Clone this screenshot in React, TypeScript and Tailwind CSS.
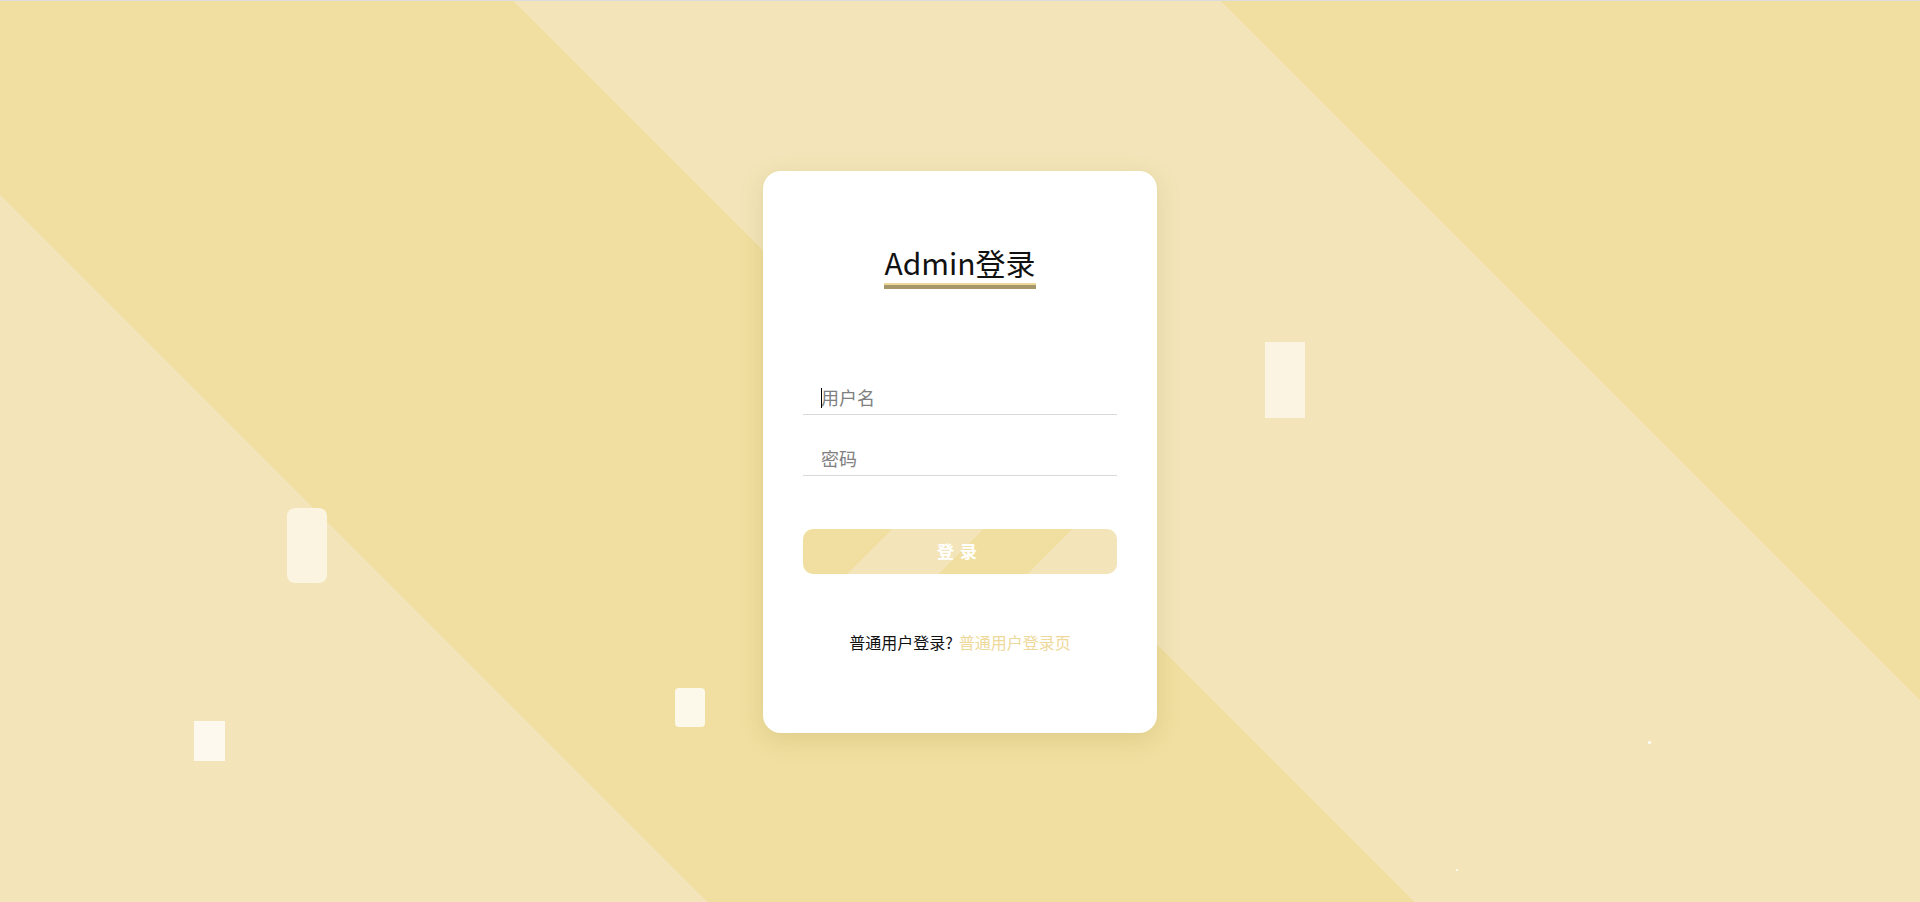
import { useState } from "react";

const font = { fontFamily: '"Noto Sans CJK SC", "Noto Sans", sans-serif' };

function Field({ placeholder, type = "text", caret = false }: { placeholder: string; type?: string; caret?: boolean }) {
  const [value, setValue] = useState("");
  return (
    <div className="relative w-full">
      <input
        type={type}
        value={value}
        onChange={(e) => setValue(e.target.value)}
        placeholder={placeholder}
        className="block h-[40px] w-full border-b border-[#d9d9d9] bg-transparent pt-[6px] pl-[18px] text-[18px] text-[#333] outline-none placeholder:text-[#808080]"
        style={font}
      />
      {caret && !value && <span className="absolute left-[18px] top-[13px] h-[20px] w-px bg-black" />}
    </div>
  );
}

export default function App() {
  return (
    <div className="flex h-screen w-full flex-col overflow-hidden" style={font}>
      <div className="h-px w-full bg-[#dcdcdc]" />
      <div className="relative flex flex-1 items-center justify-center bg-[image:repeating-linear-gradient(45deg,#f3e5b9_0px,#f3e5b9_500px,#f0dfa0_500px,#f0dfa0_1000px)]">
        {/* floating bits */}
        <div className="absolute left-[287px] top-[507px] h-[75px] w-[40px] rounded-[8px] bg-[#fbf4e1]" />
        <div className="absolute left-[1265px] top-[341px] h-[76px] w-[40px] bg-[#fbf4e3]" />
        <div className="absolute left-[194px] top-[720px] h-[40px] w-[31px] bg-[#fdf9ee]" />
        <div className="absolute left-[675px] top-[687px] h-[39px] w-[30px] rounded-[4px] bg-[#fcf8ea]" />
        <div className="absolute left-[1648px] top-[740px] h-[3px] w-[3px] rounded-full bg-white" />
        <div className="absolute left-[1456px] top-[868px] h-[2px] w-[2px] rounded-full bg-white" />

        <div className="relative flex h-[562px] w-[394px] flex-col items-center rounded-[18px] bg-white px-10 pt-[73px] shadow-[0_6px_24px_rgba(150,120,40,0.18)]">
          <div className="inline-flex flex-col">
            <h1 className="text-[30px] leading-[36px] font-normal text-[#111]">Admin登录</h1>
            <div className="mt-[3px] h-[2px] w-full bg-[#ecd898]" />
            <div className="h-[4px] w-full bg-[#a6976a]" />
          </div>

          <div className="mt-[86px] flex w-full flex-col gap-[21px]">
            <Field placeholder="用户名" caret />
            <Field placeholder="密码" type="password" />
          </div>

          <button className="mt-[53px] h-[45px] w-full rounded-[10px] bg-[image:repeating-linear-gradient(135deg,#f0dfa0_0px,#f0dfa0_63.6px,#f3e5b9_63.6px,#f3e5b9_127.3px)] text-[17px] font-bold tracking-[6px] text-white">
            登录
          </button>

          <p className="mt-[56px] flex items-baseline text-[16px] leading-[24px] text-[#111]">
            <span>普通用户登录?</span>
            <a href="#" className="ml-[6px] text-[#eed89a]">
              普通用户登录页
            </a>
          </p>
        </div>
      </div>
    </div>
  );
}
